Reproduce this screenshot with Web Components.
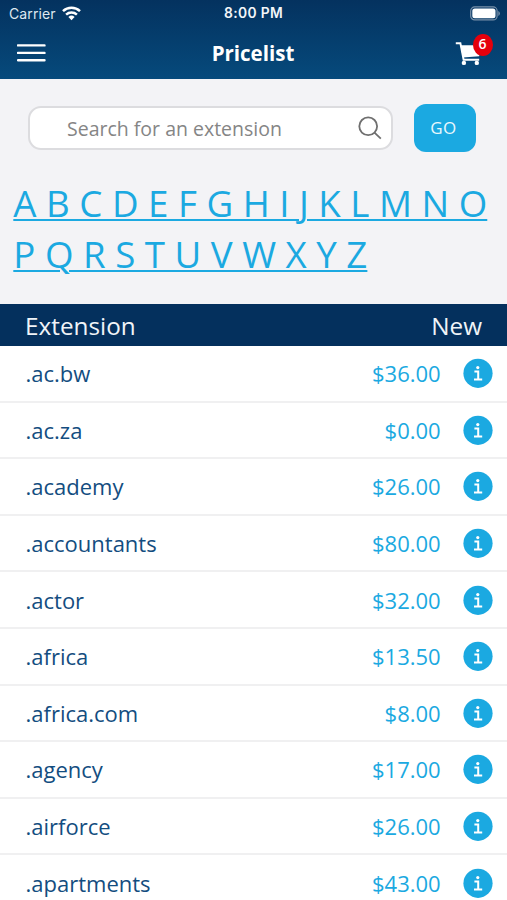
<!DOCTYPE html>
<html lang="en">
<head>
<meta charset="utf-8">
<title>Pricelist</title>
<style>
html,body{margin:0;height:100%;overflow:hidden;background:#fff}
body{font-family:"Open Sans","Noto Sans",sans-serif}
</style>
</head>
<body>
<pricelist-app></pricelist-app>
<script>
const define = (name, html, setup) => customElements.define(name, class extends HTMLElement {
  connectedCallback() {
    if (this.shadowRoot) return;
    const t = document.createElement('template');
    t.innerHTML = html;
    this.attachShadow({mode: 'open'}).append(t.content.cloneNode(true));
    if (setup) setup(this, this.shadowRoot);
  }
});

define('status-bar', `
<style>
:host{display:grid;grid-template-columns:1fr auto 1fr;align-items:center;height:27px;padding:0 7px 0 9px;box-sizing:border-box;color:#fff;font-family:Inter,"Liberation Sans",sans-serif;font-size:14px;line-height:27px}
.left{display:flex;align-items:center;gap:6px;color:#dfe8f0;letter-spacing:.12px}
.time{font-weight:600;font-size:13.8px;letter-spacing:.35px;margin-left:-2px;color:#f3f6f9}
.bat{justify-self:end}
svg{display:block}
</style>
<div class="left"><span>Carrier</span>
<svg width="19" height="15" viewBox="0 0 19 15" fill="none" stroke="#fff" stroke-width="2.5"><path d="M1 5.2a12.3 12.3 0 0 1 17 0M4.1 8.6a7.9 7.9 0 0 1 10.8 0"/><path d="M6.4 11a4.6 4.6 0 0 1 6.2 0L9.5 14.2z" fill="#fff" stroke="none"/></svg></div>
<span class="time">8:00 PM</span>
<svg class="bat" width="30" height="15" viewBox="0 0 30 15"><rect x=".7" y=".9" width="26.4" height="13" rx="4" fill="none" stroke="#7890a9" stroke-width="1.2"/><rect x="2.3" y="2.5" width="23.2" height="9.8" rx="2.5" fill="#fff"/><path d="M28.3 5v5q1.6-.7 1.6-2.5T28.3 5z" fill="#7890a9"/></svg>`);

define('cart-button', `
<style>
:host{display:block;position:relative;width:39px;height:32px}
.cart{display:block;position:absolute;left:0;top:8px}
.badge{position:absolute;left:18px;top:0;width:20px;height:22px;border-radius:50%;background:#e5000c;color:#fff;font-weight:600;font-size:14px;line-height:19px;text-align:center;text-indent:-1px}
</style>
<svg class="cart" width="27" height="24" viewBox="0 0 27 24"><path d="M.8 1.3h4.6l3.2 16.4h15.6" fill="none" stroke="#fff" stroke-width="1.9"/><path d="M5.4 3.2H26L24.2 14.2 7.8 15.6z" fill="#fff"/><circle cx="8.9" cy="20.9" r="2.2" fill="#fff"/><circle cx="21.8" cy="20.9" r="2.2" fill="#fff"/></svg>
<span class="badge"><slot></slot></span>`);

define('app-header', `
<style>
:host{display:block;height:79px;background:linear-gradient(#04325f,#064a7c);color:#fff}
.bar{display:grid;grid-template-columns:1fr auto 1fr;height:52px;padding:0 13px 0 17px}
.menu{display:block;margin-top:16px}
h1{margin:0 0 0 -5px;font-size:20.5px;line-height:53px;font-weight:700}
cart-button{justify-self:end;margin-top:7px}
</style>
<status-bar></status-bar>
<div class="bar">
<svg class="menu" width="29" height="20" viewBox="0 0 29 20" stroke="#fff" stroke-width="2.4" stroke-linecap="round"><path d="M1 2.4h26.5M1 9.9h26.5M1 17.2h26.5"/></svg>
<h1><slot></slot></h1>
<cart-button>6</cart-button>
</div>`);

define('search-bar', `
<style>
:host{display:flex;align-items:center;gap:21px;padding:25px 31px 0 28px}
.field{flex:1;display:flex;align-items:center;justify-content:space-between;height:43.5px;box-sizing:border-box;border:2px solid #dcdcdf;border-radius:13px;background:#fff;padding:0 9px 0 37px;color:#858585;font-size:19.5px;line-height:40px}
.field span{padding-top:1px}
button{width:62px;height:48px;border:0;border-radius:12px;background:#1ba9e1;color:#e9f8fd;font:17px/48px "Open Sans","Noto Sans",sans-serif;padding:0 3px 0 0;letter-spacing:.5px}
svg{display:block}
</style>
<div class="field"><span><slot></slot></span>
<svg width="24" height="24" viewBox="0 0 24 24" fill="none" stroke="#6f6f6f" stroke-width="1.8"><circle cx="10.2" cy="10.3" r="8.9"/><path d="M16.5 16.6l6.3 6"/></svg></div>
<button>GO</button>`);

define('letter-index', `
<style>
:host{display:block;padding:26px 0 0 13.3px;font-size:36.7px;line-height:51px;white-space:nowrap}
a{display:block;width:max-content;color:#1ba9e1;text-decoration:underline;text-decoration-thickness:2px;text-underline-offset:2px}
</style>
<a>A B C D E F G H I J K L M N O</a><a>P Q R S T U V W X Y Z</a>`);

define('price-row', `
<style>
:host{display:grid;grid-template-columns:1fr auto 30px;column-gap:22px;align-items:center;height:56.6px;box-sizing:border-box;border-bottom:2px solid #f0f0f1;padding:0 14.5px 0 25.5px;font-size:22px;line-height:30px}
.name{color:#134d80}
.price{color:#1ba9e1;margin-right:-.2px}
.info{display:block}
</style>
<span class="name"><slot></slot></span><span class="price"></span>
<svg class="info" width="30" height="30" viewBox="0 0 30 30"><circle cx="15" cy="15.3" r="14.6" fill="#1ba9e1"/><circle cx="14.8" cy="9.6" r="1.6" fill="#fff"/><path d="M11.4 13.6h3.8v7.6M11 21.5h8.2" fill="none" stroke="#fff" stroke-width="2"/></svg>`,
(el, root) => { root.querySelector('.price').textContent = el.getAttribute('price'); });

define('price-table', `
<style>
:host{display:block}
header{display:flex;justify-content:space-between;height:42px;padding:0 25px;background:#04305d;color:#f0f4f8;font-size:24.3px;line-height:43px}
</style>
<header><span>Extension</span><span>New</span></header>
<slot></slot>`);

define('pricelist-app', `
<style>
:host{display:block;width:507px;height:900px;overflow:hidden;background:#fff}
.tools{height:225px;background:#f3f3f6}
</style>
<app-header>Pricelist</app-header>
<div class="tools"><search-bar>Search for an extension</search-bar><letter-index></letter-index></div>
<price-table>
<price-row price="$36.00">.ac.bw</price-row>
<price-row price="$0.00">.ac.za</price-row>
<price-row price="$26.00">.academy</price-row>
<price-row price="$80.00">.accountants</price-row>
<price-row price="$32.00">.actor</price-row>
<price-row price="$13.50">.africa</price-row>
<price-row price="$8.00">.africa.com</price-row>
<price-row price="$17.00">.agency</price-row>
<price-row price="$26.00">.airforce</price-row>
<price-row price="$43.00">.apartments</price-row>
</price-table>`);
</script>
</body>
</html>
